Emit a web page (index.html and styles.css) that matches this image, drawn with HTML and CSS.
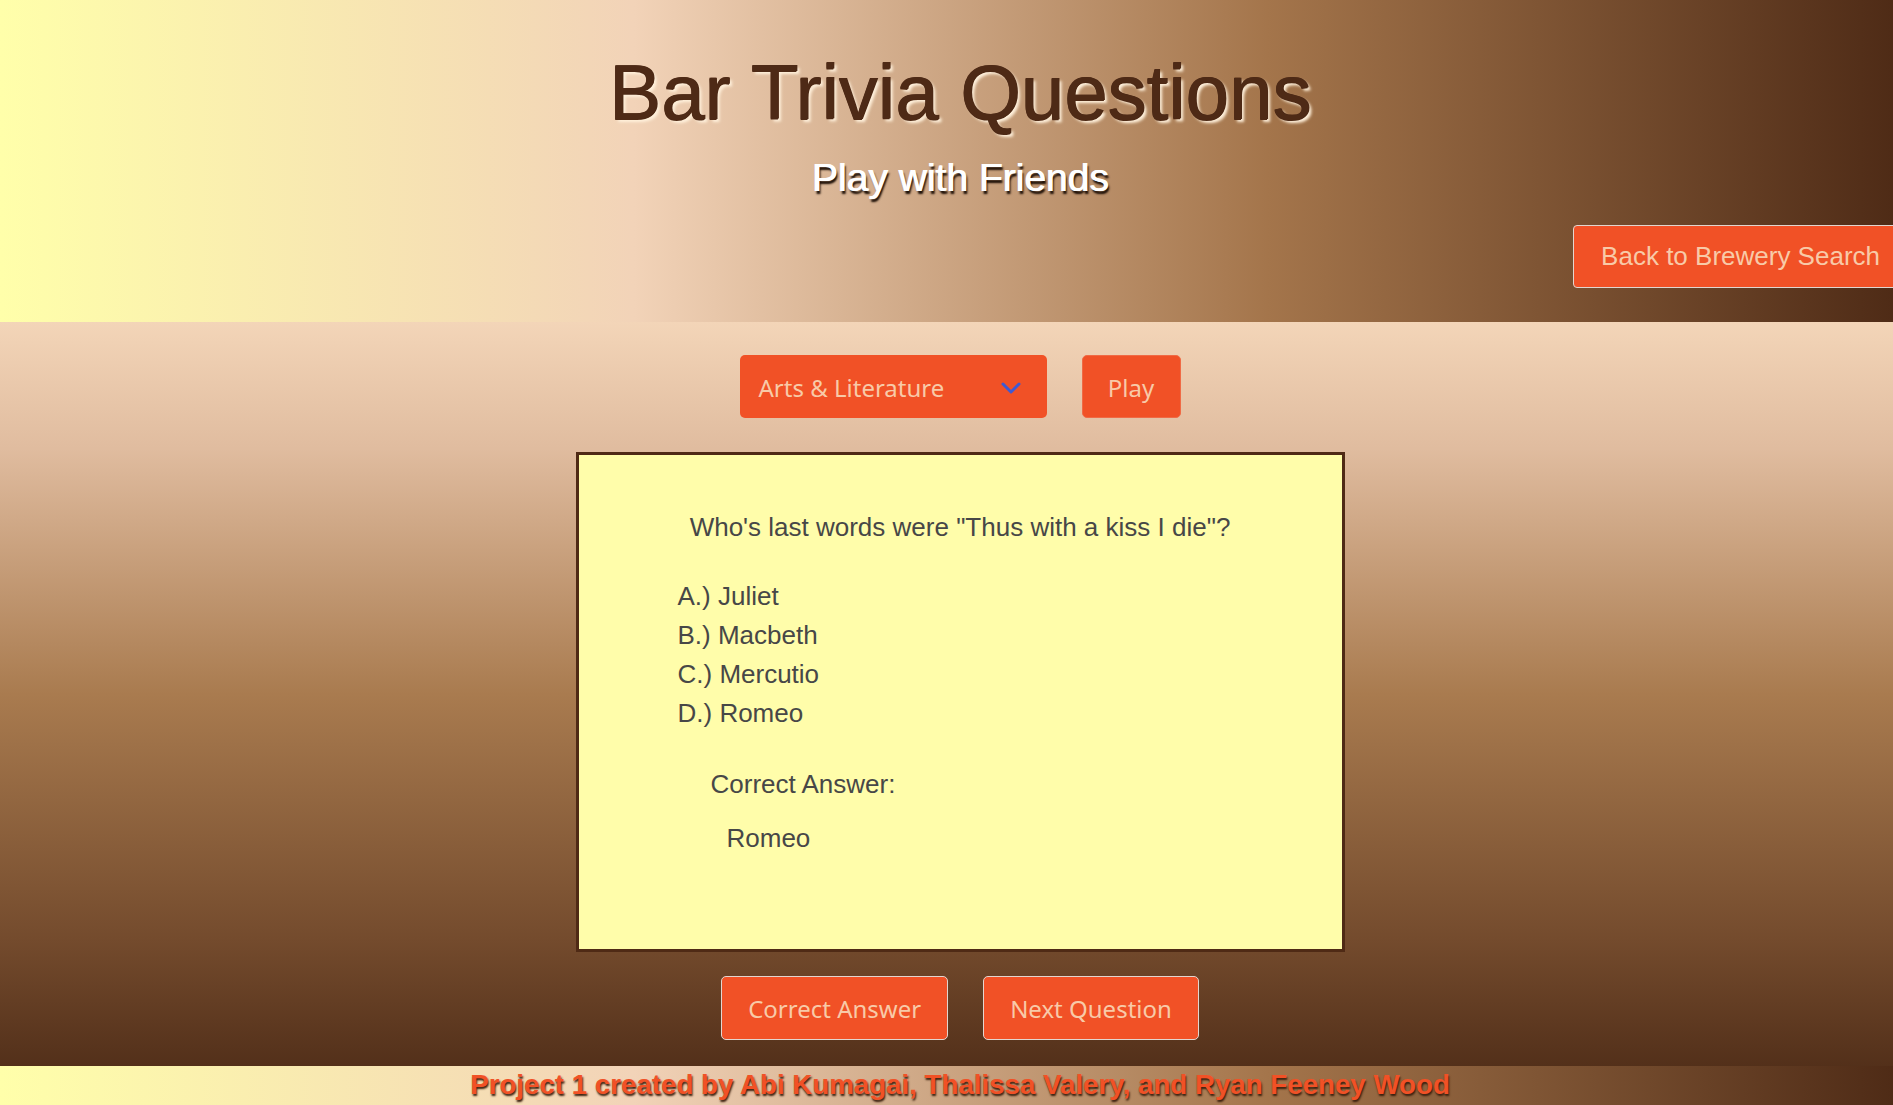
FILE: index.html
```html
<!DOCTYPE html>
<html lang="en">
<head>
<meta charset="utf-8">
<title>Bar Trivia Questions</title>
<link rel="stylesheet" href="styles.css">
</head>
<body>
<div class="page">
  <header class="hero">
    <h1 class="title">Bar Trivia Questions</h1>
    <p class="subtitle">Play with Friends</p>
    <a class="back-btn" href="#">Back to Brewery Search</a>
  </header>
  <main class="main">
    <div class="controls">
      <div class="select">
        <span class="select-label">Arts &amp; Literature</span>
        <svg class="chevron" width="20" height="12" viewBox="0 0 20 12"><polyline points="2,2 10,10 18,2" fill="none" stroke="#3d5ad4" stroke-width="3" stroke-linecap="round" stroke-linejoin="round"/></svg>
      </div>
      <button class="btn play-btn">Play</button>
    </div>
    <section class="card">
      <p class="question">Who's last words were "Thus with a kiss I die"?</p>
      <ul class="options">
        <li>A.) Juliet</li>
        <li>B.) Macbeth</li>
        <li>C.) Mercutio</li>
        <li>D.) Romeo</li>
      </ul>
      <p class="answer-label">Correct Answer:</p>
      <p class="answer">Romeo</p>
    </section>
    <div class="actions">
      <button class="btn action-btn">Correct Answer</button>
      <button class="btn action-btn">Next Question</button>
    </div>
  </main>
  <footer class="footer">
    <p class="credits">Project 1 created by Abi Kumagai, Thalissa Valery, and Ryan Feeney Wood</p>
  </footer>
</div>
</body>
</html>
```
FILE: styles.css
```css
html, body {
  margin: 0;
  padding: 0;
  overflow: hidden;
}
body {
  font-family: "Liberation Sans", Arial, sans-serif;
  background: #53301a;
}
.page {
  width: 1920px;
  display: flex;
  flex-direction: column;
}
.hero {
  height: 322px;
  box-sizing: border-box;
  padding-top: 48px;
  display: flex;
  flex-direction: column;
  align-items: center;
  background: linear-gradient(to right, #ffffaa 0%, #f2d3b8 33%, #a4754b 66%, #4b2814 100%);
}
.title {
  margin: 0;
  font-size: 78px;
  font-weight: normal;
  line-height: 88px;
  color: #4e2a16;
  text-shadow: 1px 0 0 #4e2a16, 0 1px 0 #4e2a16, 3px 3px 3px #fff1dc;
}
.subtitle {
  margin: 20px 0 0;
  font-size: 39px;
  line-height: 44px;
  color: #ffffff;
  text-shadow: 1px 0 0 #ffffff, 2px 3px 2px #1a0d05;
}
.back-btn {
  align-self: flex-end;
  margin: 25px 12px 0 0;
  height: 63px;
  box-sizing: border-box;
  padding: 0 27px;
  display: flex;
  align-items: center;
  font-size: 26px;
  color: #f8caa8;
  text-decoration: none;
  background: #f15126;
  border: 1px solid #e2d6d0;
  border-radius: 4px;
}
.main {
  height: 744px;
  box-sizing: border-box;
  padding-top: 33px;
  display: flex;
  flex-direction: column;
  align-items: center;
  background: linear-gradient(to bottom, #f3d5b8 0%, #e0bc9f 17%, #a97b4f 50%, #744b2d 83%, #53301a 100%);
}
.controls {
  display: flex;
  gap: 35px;
  height: 63px;
}
.select {
  width: 307px;
  height: 63px;
  box-sizing: border-box;
  padding: 2px 26px 0 19px;
  display: flex;
  align-items: center;
  justify-content: space-between;
  background: #f15126;
  border-radius: 5px;
  font-family: "Noto Sans", sans-serif;
  font-size: 24px;
  color: #f8caa8;
}
.select-label {
  line-height: 1;
}
.chevron {
  display: block;
}
.btn {
  margin: 0;
  background: #f15126;
  color: #f8caa8;
  font-family: "Noto Sans", sans-serif;
  font-size: 24px;
  border-radius: 5px;
  cursor: pointer;
}
.play-btn {
  width: 99px;
  height: 63px;
  padding: 2px 0 0;
  border: 1px solid #f06a45;
}
.card {
  margin-top: 34px;
  width: 769px;
  height: 500px;
  box-sizing: border-box;
  border: 3px solid #4f2a15;
  background: #fffdaa;
  color: #474747;
  font-size: 26px;
  padding-top: 57px;
}
.question {
  margin: 0;
  text-align: center;
  line-height: 30px;
}
.options {
  list-style: none;
  margin: 35px 0 0;
  padding: 0 0 0 99px;
  line-height: 39px;
}
.answer-label {
  margin: 36px 0 0;
  padding-left: 132px;
  line-height: 30px;
}
.answer {
  margin: 24px 0 0;
  padding-left: 148px;
  line-height: 30px;
}
.actions {
  margin-top: 24px;
  display: flex;
  gap: 35px;
}
.action-btn {
  height: 64px;
  padding: 0 26px;
  border: 1px solid #e2d6d0;
}
.footer {
  height: 45px;
  box-sizing: border-box;
  padding-top: 3px;
  display: flex;
  justify-content: center;
  background: linear-gradient(to right, #ffffaa 0%, #f2d3b8 33%, #a4754b 66%, #4b2814 100%);
}
.credits {
  margin: 0;
  font-size: 27.7px;
  font-weight: bold;
  line-height: 31px;
  color: #f15126;
  text-shadow: 1px 2px 2px #3a1e0c;
}
```
